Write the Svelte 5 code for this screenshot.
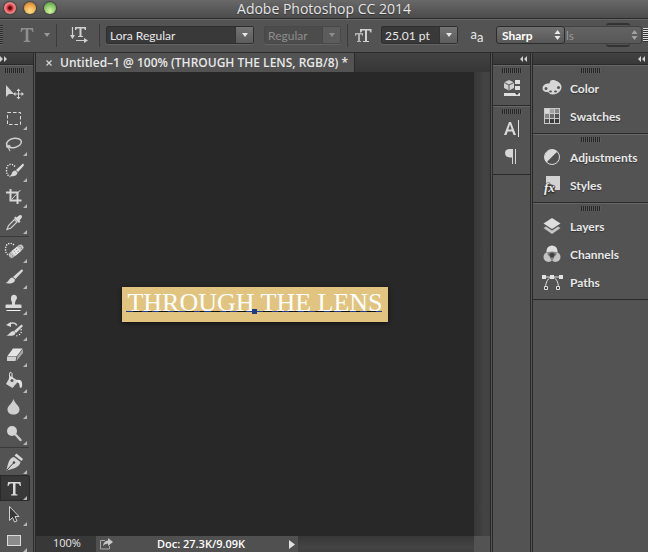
<script>
  const tools = [
    { name: 'move', label: 'Move Tool', plain: true },
    { name: 'marquee', label: 'Rectangular Marquee Tool' },
    { name: 'lasso', label: 'Lasso Tool' },
    { name: 'quick', label: 'Quick Selection Tool' },
    { name: 'crop', label: 'Crop Tool' },
    { name: 'dropper', label: 'Eyedropper Tool' },
    { name: 'heal', label: 'Spot Healing Brush Tool', divider: true },
    { name: 'brush', label: 'Brush Tool' },
    { name: 'stamp', label: 'Clone Stamp Tool' },
    { name: 'history', label: 'History Brush Tool' },
    { name: 'eraser', label: 'Eraser Tool' },
    { name: 'bucket', label: 'Paint Bucket Tool' },
    { name: 'blur', label: 'Blur Tool' },
    { name: 'dodge', label: 'Dodge Tool' },
    { name: 'pen', label: 'Pen Tool', divider: true },
    { name: 'type', label: 'Horizontal Type Tool' },
    { name: 'path', label: 'Path Selection Tool' },
    { name: 'rect', label: 'Rectangle Tool' }
  ];

  const iconGroups = [['properties'], ['character', 'paragraph']];

  const panelGroups = [
    ['Color', 'Swatches'],
    ['Adjustments', 'Styles'],
    ['Layers', 'Channels', 'Paths']
  ];

  let activeTool = $state('type');
  let font = $state('Lora Regular');
  let fontStyle = $state('Regular');
  let size = $state('25.01 pt');
  let antialias = $state('Sharp');
</script>

{#snippet grip()}
  <div class="grip"></div>
{/snippet}

{#snippet updown()}
  <svg class="updown" width="7" height="10" viewBox="0 0 7 10" aria-hidden="true">
    <path d="M3.5 0 6.5 4h-6zM3.5 10l3-4h-6z" fill="currentColor" />
  </svg>
{/snippet}

{#snippet chevron()}
  <svg width="6" height="4" viewBox="0 0 6 4" aria-hidden="true">
    <path d="M0 0h6L3 4z" fill="currentColor" />
  </svg>
{/snippet}

{#snippet toolIcon(name)}
  {#if name === 'move'}
    <path d="M6 6v12l3-3h5z" fill="#d2d2d2" />
    <path d="M18.500 11v8M14.500 15h8" stroke="#d2d2d2" fill="none" />
    <path d="M18.500 9.500l2 2.500h-4zM18.500 20.500l2-2.500h-4zM13 15l2.500-2v4zM24 15l-2.500-2v4z" fill="#d2d2d2" />
  {:else if name === 'marquee'}
    <rect x="7.500" y="7.500" width="13" height="12" fill="none" stroke="#dcdcdc" stroke-dasharray="3.500 2" />
  {:else if name === 'lasso'}
    <ellipse cx="14" cy="12" rx="7.500" ry="4.500" fill="none" stroke="#cfcfcf" stroke-width="1.500" transform="rotate(-12 14 12)" />
    <path d="M7.500 14c-1.500 1-1 2.500.5 2.500s2 0 2-1-1-1.500-1.500-.5c-.5 1.500 0 3 1.500 5" fill="none" stroke="#cfcfcf" stroke-width="1.200" />
  {:else if name === 'quick'}
    <path d="M15 9.500C11 5 6.500 8 6.500 13c0 4 1.500 6 4 6.500" fill="none" stroke="#eee" stroke-width="1.400" stroke-dasharray="1.200 1.300" />
    <path d="M23 6.500c1 .5 1 1.500.5 2.500L18 15l-2-2z" fill="#dedede" />
    <path d="M15.500 13.500l2 2c-.5 4-5 4-7.500 3.500 2-.5 1.500-5.500 5.500-5.500z" fill="#d6d6d6" />
  {:else if name === 'crop'}
    <path d="M10.500 6v11.500h11M6 9.500h11.500V21" fill="none" stroke="#d6d6d6" stroke-width="2" />
    <path d="M12 16l8.500-9" stroke="#d6d6d6" fill="none" />
  {:else if name === 'dropper'}
    <path d="M16.500 8.500l2.500-2c2-1.500 4 .5 2.500 2.500l-2 2.500 1 1-1.500 1.500-5-5L15.500 7.500z" fill="#dadada" />
    <path d="M14.500 10.500l-6 6-1.500 4 4-1.500 6-6z" fill="#555" stroke="#d0d0d0" stroke-width="1.200" />
  {:else if name === 'heal'}
    <path d="M14 7C10 3.500 5.500 6 5.500 11c0 3 1 5 3 6" fill="none" stroke="#f4f4f4" stroke-width="1.400" stroke-dasharray="1.200 1.300" />
    <g transform="rotate(-40 16 13)">
      <rect x="7" y="10" width="18" height="6.500" rx="3" fill="#c4c4c4" stroke="#3f3f3f" stroke-width=".6" />
      <rect x="12.500" y="10.300" width="7" height="6" fill="#e6e6e6" />
      <path d="M14 12h1m2 0h1m-4 2.500h1m2 0h1M9.500 12h1m-1 2.500h1m11-2.500h1m-1 2.500h1" stroke="#777" />
    </g>
  {:else if name === 'brush'}
    <path d="M21.500 5.500c1 0 2 .5 1 2L15.500 15l-2.500-2z" fill="#d9d9d9" />
    <path d="M12.500 13.500l2.500 2c0 4-5 4.500-10 3.500 4-.5 3.500-5 7.500-5.500z" fill="#d9d9d9" />
  {:else if name === 'stamp'}
    <path d="M11 8a3 3 0 1 1 5 2l-1 2.500v2h5.500q1 0 1 1V18h-16v-2.500q0-1 1-1H12v-2L11 10z" fill="#dadada" />
    <path d="M6.500 20.500h14" stroke="#f2f2f2" />
  {:else if name === 'history'}
    <path d="M8.500 8.500c4-3 8-1 8 1" fill="none" stroke="#dadada" stroke-width="1.500" />
    <path d="M6 9l5-3v5z" fill="#dadada" />
    <path d="M21.500 8.500L23 10l-7 7-2-2zM13.500 15l2 2c-1 3.500-5 3-9.500 2.500 4-.5 4-4.500 7.500-4.500z" fill="#dadada" />
    <path d="M21 13q1 4-1.500 5.500T15 20" fill="none" stroke="#eee" stroke-width="1.200" stroke-dasharray="1.200 1.500" />
  {:else if name === 'eraser'}
    <path d="M13 6.500h9.500L17 14H7.500z" fill="#e4e4e4" />
    <path d="M7 14.500h9.500l-1 4.500H7z" fill="#cfcfcf" />
    <path d="M17.500 14.500L23 7v4l-6.500 8z" fill="#aaa" />
  {:else if name === 'bucket'}
    <path d="M10.500 8l-4.500 8 6.500 4 6-7z" fill="#d4d4d4" />
    <path d="M12 13V5.500q-2-3-2.500 1L10 12" fill="none" stroke="#eee" />
    <circle cx="12" cy="12.500" r="1.500" fill="#555" />
    <path d="M16.500 12q5-1 5.500 3 .5 4-1 5-1.500 0-1.500-2.500 0-3-3-3.500z" fill="#e4e4e4" />
  {:else if name === 'blur'}
    <path d="M13.500 5c1.500 5 6 6.500 6 10.500 0 3-2.500 5-6 5s-6-2-6-5C7.500 11.500 12 10 13.500 5z" fill="#cfcfcf" />
  {:else if name === 'dodge'}
    <path d="M15.500 14.500l5 5.500" stroke="#c8c8c8" stroke-width="2.500" stroke-linecap="round" />
    <circle cx="12" cy="11" r="5" fill="#d4d4d4" />
  {:else if name === 'pen'}
    <path d="M16.500 4.500l6.500 5.500-1.500 2-7-5.500z" fill="#d9d9d9" />
    <path d="M14 8l6.500 5c-1 5-6 6.500-14 8.500C8 14.500 9 9 14 8z" fill="#d4d4d4" />
    <path d="M7 21l6.500-7" stroke="#3b3b3b" fill="none" />
    <circle cx="14" cy="13.500" r="1.200" fill="#444" />
  {:else if name === 'type'}
    <path d="M8 7h12.500l.5 4h-1q-.5-2.500-2-2.500h-2.500v10q0 1 2 1v1h-6.500v-1q2 0 2-1v-10h-2.500q-1.500 0-2 2.500h-1z" fill="#d9d9d9" />
  {:else if name === 'path'}
    <path d="M9.500 5.500v14l3-3 2 4.500 2.500-1-2-4.500h4z" fill="#383838" stroke="#cfcfcf" />
  {:else}
    <rect x="7.500" y="8.500" width="13" height="10" fill="#8c8c8c" stroke="#dadada" />
  {/if}
{/snippet}

{#snippet panelIcon(name)}
  <svg width="22" height="22" viewBox="0 0 22 22" aria-hidden="true">
    {#if name === 'Color'}
      <path fill-rule="evenodd" d="M9 5q0-2.500 4-2 6 1.500 7.500 6 .5 5-4.500 7.500-4 1.500-7 .5-1-2-3-2-4.500 0-4.500-4 .5-4 5-4.500Q9 7 9 5zM3.500 11.500a1.500 1.500 0 1 0 3 0 1.500 1.500 0 0 0-3 0zm4.500 3a1.500 1 0 1 0 3 0 1.500 1 0 0 0-3 0zm5 0a1.500 1 0 1 0 3 0 1.500 1 0 0 0-3 0zm3-4a1.500 1.500 0 1 0 3 0 1.500 1.500 0 0 0-3 0z" fill="#d6d6d6" />
    {:else if name === 'Swatches'}
      <path d="M3 3h16v16H3z" fill="#c9c9c9" />
      <path d="M4 4h4v4H4z" fill="#d8d8d8" />
      <path d="M9 4h4v4H9z" fill="#a2a2a2" />
      <path d="M14 4h4v4h-4zM4 9h4v4H4z" fill="#858585" />
      <path d="M9 9h4v4H9z" fill="#6b6b6b" />
      <path d="M14 9h4v4h-4zM4 14h4v4H4z" fill="#505050" />
      <path d="M9 14h9v4H9z" fill="#393939" />
      <path d="M13 14h1v4h-1z" fill="#c9c9c9" />
    {:else if name === 'Adjustments'}
      <circle cx="11" cy="11" r="7.500" fill="#555" stroke="#dadada" />
      <path d="M5.500 16.500a7.800 7.800 0 0 1 11-11z" fill="#dadada" />
      <path d="M6.500 15.500a6.400 6.400 0 0 0 9-9z" fill="#505050" />
    {:else if name === 'Styles'}
      <path d="M5 2h14v14h-5l-2-5-3-1-2 1H5z" fill="#d3d3d3" />
      <text x="3" y="18" class="fx">fx</text>
    {:else if name === 'Layers'}
      <path d="M11 3l8.500 5.500L11 14 2.500 8.500z" fill="#dedede" />
      <path d="M2.500 13l2.500-1.500 6 4 6-4 2.500 1.500-8.500 6z" fill="#c4c4c4" />
    {:else if name === 'Channels'}
      <circle cx="11" cy="8" r="5.500" fill="#dedede" />
      <circle cx="7.500" cy="14" r="5" fill="#c4c4c4" />
      <circle cx="14.500" cy="14" r="5" fill="#c4c4c4" />
      <path d="M6 9.500q5-2 10 0-.5 3-2.500 4-1 3-2.500 5-1.500-2-2.500-5-2-1-2.500-4z" fill="#858585" />
      <path d="M11 9.500l3 1.500-1.500 3.500h-3L8 11z" fill="#424242" />
    {:else if name === 'Paths'}
      <path d="M2 6h18M4.500 16.500c0-5 3-10.500 6.500-10.500s6.500 5 6.500 10.500" fill="none" stroke="#ddd" />
      <path d="M1 4h4v4H1zM9 4h4v4H9zM18 4h4v4h-4z" fill="#e2e2e2" />
      <path d="M3.500 15.500h3v3h-3zM15.500 15.500h3v3h-3z" fill="#444" stroke="#ddd" />
    {:else if name === 'properties'}
      <path d="M8 3l5 2.500v5.500L8 13.500 3 11V5.500z" fill="#d0d0d0" />
      <path d="M3 5.500L8 8l5-2.500M8 8v5" fill="none" stroke="#555" />
      <path d="M14 3h5v4h-5zM14 9h5v4h-5zM3 16h16v3H3z" fill="#dedede" />
      <path d="M14 16h4l-2 2z" fill="#333" />
    {:else if name === 'character'}
      <path fill-rule="evenodd" d="M8 4h2l5 13h-2.500l-1.200-3.500H6.700L5.500 17H3zM7.300 11.500h3.400L9 6.500z" fill="#dadada" />
      <path d="M17.500 2v17" stroke="#e2e2e2" />
    {:else}
      <path d="M14.500 3v15M11.500 3v15" stroke="#d6d6d6" />
      <path d="M15 3H9Q4 3 4 7t5 4.500h3V3z" fill="#d6d6d6" />
    {/if}
  </svg>
{/snippet}

<div class="app">
  <header class="titlebar">
    <div class="lights">
      <button class="light red" aria-label="Close"></button>
      <button class="light amber" aria-label="Minimize"></button>
      <button class="light green" aria-label="Zoom"></button>
    </div>
    <h1>Adobe Photoshop CC 2014</h1>
  </header>

  <div class="options">
    <div class="side-grip"></div>
    <button class="preset" aria-label="Tool presets">
      <svg width="14" height="16" viewBox="0 0 14 16" aria-hidden="true">
        <path d="M1 1h12l.5 4h-1Q12 2.500 10.500 2.500H8.300V13q0 1 2 1v1H3.700v-1q2 0 2-1V2.500H3.500Q2 2.500 1.500 5h-1z" fill="#8e8e8e" />
      </svg>
      {@render chevron()}
    </button>
    <button class="orient" aria-label="Toggle text orientation">
      <svg width="18" height="18" viewBox="0 0 18 18" aria-hidden="true">
        <path d="M5 1h11v3h-1l-1-1.500h-2.500V10H13v1H8v-1h1.500V2.500H7L6 4H5z" fill="#d0d0d0" />
        <path d="M2.500 1v10M6 14.500h10" stroke="#d0d0d0" stroke-width="1.200" />
        <path d="M0 9h5l-2.500 4zM14 12l4 2.500-4 2.500z" fill="#d0d0d0" />
      </svg>
    </button>
    <div class="combo family">
      <input aria-label="Font family" bind:value={font} />
      <button aria-label="Choose font family">{@render chevron()}</button>
    </div>
    <div class="combo style off">
      <input aria-label="Font style" bind:value={fontStyle} disabled />
      <button aria-label="Choose font style" disabled>{@render chevron()}</button>
    </div>
    <label class="size-label" for="size" aria-label="Font size">
      <svg width="17" height="15" viewBox="0 0 17 15" aria-hidden="true">
        <path d="M5 1h11.500v3.500h-1L14.500 2.500h-2.500V13h2v1H8v-1h2V2.500H7.500L6 4.500H5z" fill="#d0d0d0" />
        <path d="M0 5h8v3H7.500L6.500 6.500H5V13h1v1H2v-1h1V6.500H1.500L.5 8H0z" fill="#b2b2b2" />
      </svg>
    </label>
    <div class="combo size">
      <input id="size" bind:value={size} />
      <button aria-label="Choose font size">{@render chevron()}</button>
    </div>
    <label class="aa" for="aa"><span>a</span><span class="low">a</span></label>
    <div class="pop sharp">
      <select id="aa" bind:value={antialias}>
        <option>Sharp</option>
        <option>Crisp</option>
        <option>Smooth</option>
      </select>
      {@render updown()}
    </div>
    <div class="pop under">
      <select aria-label="Units" disabled>
        <option>ls</option>
      </select>
      {@render updown()}
    </div>
    <div class="side-grip light-grip"></div>
  </div>

  <div class="work">
    <aside class="toolbar">
      <div class="bar-head left">
        <svg width="7" height="6" viewBox="0 0 7 6" aria-hidden="true"><path d="M0 0l3 3-3 3zM4 0l3 3-3 3z" fill="#d0d0d0" /></svg>
      </div>
      <div class="grip-row">{@render grip()}</div>
      {#each tools as tool}
        {#if tool.divider}
          <div class="divider"></div>
        {/if}
        <button
          class="tool"
          class:active={activeTool === tool.name}
          aria-label={tool.label}
          aria-pressed={activeTool === tool.name}
          onclick={() => (activeTool = tool.name)}
        >
          <svg width="28" height="26" viewBox="0 0 28 26" aria-hidden="true">
            {@render toolIcon(tool.name)}
            {#if !tool.plain}
              <path d="M27 21v4h-4z" fill="#b8b8b8" />
            {/if}
          </svg>
        </button>
      {/each}
    </aside>

    <main class="document">
      <div class="tabs">
        <div class="tab">
          <button class="close" aria-label="Close document">
            <svg width="6" height="6" viewBox="0 0 6 6" aria-hidden="true"><path d="M.5.5l5 5M5.500.5l-5 5" stroke="#d6d6d6" stroke-width="1.200" /></svg>
          </button>
          <span>Untitled–1 @ 100% (THROUGH THE LENS, RGB/8) *</span>
        </div>
      </div>
      <div class="view">
        <div class="pasteboard">
          <div class="artboard">
            <span class="type-layer">THROUGH THE LENS</span>
            <div class="baseline"></div>
            <div class="handle"></div>
          </div>
        </div>
        <div class="vscroll"></div>
      </div>
      <footer class="status">
        <input class="zoom" aria-label="Zoom level" value="100%" />
        <div class="info">
          <svg width="14" height="12" viewBox="0 0 14 12" aria-hidden="true">
            <path d="M6 2.500H1.500v8.500h9V8" fill="none" stroke="#a8a8a8" />
            <path d="M9 0l5 4-5 4V5.500Q5.500 5.500 4 8q.5-5 5-5.500z" fill="#c8c8c8" />
          </svg>
          <span>Doc: 27.3K/9.09K</span>
          <button aria-label="Status options">
            <svg width="6" height="9" viewBox="0 0 6 9" aria-hidden="true"><path d="M0 0l6 4.500L0 9z" fill="#e2e2e2" /></svg>
          </button>
        </div>
        <div class="hscroll"></div>
        <div class="corner"></div>
      </footer>
    </main>

    <aside class="dock icons">
      <div class="bar-head"><svg width="7" height="6" viewBox="0 0 7 6" aria-hidden="true"><path d="M3 0L0 3l3 3zM7 0L4 3l3 3z" fill="#d0d0d0" /></svg></div>
      {#each iconGroups as group}
        <div class="group">
          {@render grip()}
          {#each group as name}
            <button class="panel" aria-label={name}>{@render panelIcon(name)}</button>
          {/each}
        </div>
      {/each}
    </aside>

    <aside class="dock names">
      <div class="bar-head"><svg width="7" height="6" viewBox="0 0 7 6" aria-hidden="true"><path d="M3 0L0 3l3 3zM7 0L4 3l3 3z" fill="#d0d0d0" /></svg></div>
      {#each panelGroups as group}
        <div class="group">
          {@render grip()}
          {#each group as name}
            <button class="panel">{@render panelIcon(name)}<span>{name}</span></button>
          {/each}
        </div>
      {/each}
    </aside>
  </div>
</div>

<style>
  :global(body) {
    background: #282828;
  }

  .app {
    display: flex;
    flex-direction: column;
    height: 100vh;
    overflow: hidden;
    font-family: "Open Sans", "Noto Sans", sans-serif;
    font-size: 11px;
    color: #e8e8e8;
    background: #535353;
  }

  .app * {
    box-sizing: border-box;
  }

  button {
    padding: 0;
    border: 0;
    background: none;
    color: inherit;
    font: inherit;
  }

  input,
  select {
    min-width: 0;
    border: 0;
    font: inherit;
    color: inherit;
  }

  svg {
    display: block;
    flex: none;
  }

  .titlebar {
    display: grid;
    grid-template-columns: 1fr auto 1fr;
    align-items: center;
    height: 19px;
    flex: none;
    border-bottom: 1px solid #2c2c2c;
    background: linear-gradient(#686868, #4c4c4c);
  }

  h1 {
    margin: 0;
    font-size: 14px;
    font-weight: 400;
    line-height: 18px;
    color: #e6e6e6;
    text-shadow: 0 1px 1px #333;
  }

  .lights {
    display: flex;
    gap: 8px;
    padding: 0 0 2px 4px;
  }

  .light {
    width: 12px;
    height: 12px;
    border-radius: 50%;
    box-shadow: 0 0 1px 1px #444;
  }

  .red {
    background: radial-gradient(circle at 50% 50%, #5c0a0c 0 15%, #e2444a 35%, #f08a8c 60%, #a02a2e);
  }

  .amber {
    background: radial-gradient(circle at 50% 75%, #ffe08a, #eea646 55%, #a86a24);
  }

  .green {
    background: radial-gradient(circle at 50% 75%, #d6f5a6, #86c464 55%, #4c7c38);
  }

  .options {
    display: flex;
    align-items: center;
    height: 34px;
    flex: none;
    padding-bottom: 2px;
    border-top: 1px solid #666;
    border-bottom: 1px solid #2c2c2c;
    font-family: Lato, "Open Sans", sans-serif;
    font-size: 12px;
  }

  .side-grip {
    width: 3px;
    height: 20px;
    background: repeating-linear-gradient(#2e2e2e 0 1px, #626262 1px 2px);
  }

  .light-grip {
    flex: 1;
    height: 14px;
    margin-left: 1px;
    background: repeating-linear-gradient(#ddd 0 1px, #333 1px 2px);
  }

  .preset,
  .orient {
    display: flex;
    align-items: center;
    height: 23px;
    border-right: 1px solid #3c3c3c;
  }

  .preset {
    width: 54px;
    gap: 10px;
    padding-left: 17px;
    color: #999;
  }

  .orient {
    width: 43px;
    padding-left: 13px;
  }

  .combo {
    display: flex;
    height: 18px;
    border: 1px solid #2e2e2e;
    border-radius: 2px;
    background: #393939;
    box-shadow: 0 1px 0 #646464;
  }

  .combo input {
    flex: 1;
    padding: 0 3px;
    background: none;
  }

  .combo button {
    display: grid;
    place-items: center;
    width: 18px;
    border-left: 1px solid #333;
    background: linear-gradient(#747474, #5c5c5c);
  }

  .family {
    width: 148px;
    margin-left: 6px;
  }

  .style {
    width: 77px;
    margin-left: 10px;
  }

  .off {
    border-color: #484848;
    background: #4c4c4c;
    color: #8e8e8e;
  }

  .off button {
    border-color: #484848;
    background: #5c5c5c;
  }

  .size-label {
    display: flex;
    align-items: center;
    width: 34px;
    height: 23px;
    margin-left: 6px;
    padding-left: 7px;
    border-left: 1px solid #3c3c3c;
  }

  .size {
    width: 77px;
  }

  .aa {
    display: flex;
    justify-content: center;
    width: 38px;
    font-size: 13px;
    line-height: 14px;
  }

  .low {
    padding-top: 3px;
  }

  .pop {
    position: relative;
    display: grid;
    align-items: center;
    height: 18px;
  }

  .pop select {
    grid-area: 1 / 1;
    height: 18px;
    padding: 0 5px;
    border: 1px solid #2c2c2c;
    border-radius: 3px;
    appearance: none;
    background: linear-gradient(#707070, #575757);
    color: #fff;
    font-weight: 700;
  }

  .pop .updown {
    grid-area: 1 / 1;
    justify-self: end;
    margin-right: 4px;
    pointer-events: none;
  }

  .sharp {
    width: 69px;
  }

  .under {
    width: 77px;
    color: #a2a2a2;
  }

  .under select {
    padding: 0 1px;
    border-color: #414141;
    border-left: 0;
    border-radius: 0 3px 3px 0;
    background: linear-gradient(#636363, #585858);
    color: #999;
    font-weight: 400;
    opacity: 1;
  }

  /* edges of the button that sits behind the units menu */
  .under::before {
    content: "";
    position: absolute;
    top: -3px;
    right: 12px;
    bottom: -3px;
    width: 24px;
    border: 2px solid #333;
    border-width: 2px 0;
    border-radius: 3px;
    pointer-events: none;
  }

  .work {
    display: flex;
    flex: 1;
    min-height: 0;
  }

  .bar-head {
    display: flex;
    align-items: center;
    justify-content: flex-end;
    height: 12px;
    flex: none;
    padding-right: 3px;
    border-bottom: 1px solid #2a2a2a;
    background: linear-gradient(#424242, #383838);
  }

  .bar-head.left {
    justify-content: flex-start;
    padding: 0;
  }

  .grip {
    width: 20px;
    height: 5px;
    background: repeating-linear-gradient(90deg, #262626 0 1px, #5a5a5a 1px 2px);
  }

  .toolbar {
    display: flex;
    flex-direction: column;
    width: 36px;
    flex: none;
    border-right: 3px double #2a2a2a;
  }

  .grip-row {
    height: 14px;
    flex: none;
    padding: 2px 5px;
    border-top: 1px solid #666;
  }

  .tool {
    height: 26px;
    flex: none;
    margin-right: 3px;
  }

  .tool.active {
    border-radius: 0 2px 2px 0;
    background: #383838;
    box-shadow: inset 0 0 1px 1px #2a2a2a;
  }

  .divider {
    height: 1px;
    flex: none;
    margin: 1px 4px 1px 0;
    background: #3a3a3a;
  }

  .document {
    display: flex;
    flex: 1;
    flex-direction: column;
    min-width: 0;
  }

  .tabs {
    display: flex;
    height: 19px;
    flex: none;
    background: linear-gradient(#424242, #363636);
  }

  .tab {
    display: flex;
    align-items: center;
    gap: 8px;
    padding: 0 6px 0 10px;
    border-right: 1px solid #2a2a2a;
    background: #535353;
    font-size: 12px;
    font-weight: 600;
    white-space: nowrap;
  }

  .view {
    display: flex;
    flex: 1;
    min-height: 0;
  }

  .pasteboard {
    display: grid;
    flex: 1;
    place-items: center;
    background: #282828;
  }

  .artboard {
    position: relative;
    padding: 0 5px;
    background: #e0c47f;
    box-shadow: 0 1px 4px #111;
  }

  .type-layer {
    display: block;
    height: 35px;
    font-family: "Liberation Serif", serif;
    font-size: 26px;
    line-height: 32px;
    color: #fff;
    white-space: nowrap;
  }

  .baseline {
    position: absolute;
    top: 24px;
    right: 6px;
    left: 4px;
    height: 1px;
    background: repeating-linear-gradient(90deg, #1d3c8c 0 7px, #111 7px 16px, #1d3c8c 16px 22px, #111 22px 26px);
  }

  .handle {
    position: absolute;
    top: 22px;
    left: calc(50% - 3px);
    width: 5px;
    height: 5px;
    background: #1d3c84;
  }

  .vscroll {
    width: 16px;
    background: linear-gradient(90deg, #373737, #444 70%, #3f3f3f);
  }

  .status {
    display: flex;
    height: 16px;
    flex: none;
    line-height: 14px;
  }

  .zoom {
    width: 60px;
    padding: 0 0 2px 17px;
    background: #383838;
  }

  .info {
    display: flex;
    align-items: center;
    justify-content: space-between;
    width: 202px;
    padding: 0 3px;
    background: #505050;
    font-weight: 600;
    color: #fff;
  }

  .hscroll {
    flex: 1;
    background: linear-gradient(#373737, #444 70%, #3f3f3f);
  }

  .corner {
    width: 16px;
    background: #535353;
  }

  .dock {
    flex: none;
    border-left: 3px double #2a2a2a;
  }

  .icons {
    width: 40px;
  }

  .names {
    width: 118px;
  }

  .group {
    display: flex;
    flex-direction: column;
    align-items: center;
    padding: 2px 0 3px;
    border-top: 1px solid #666;
    border-bottom: 1px solid #2a2a2a;
  }

  .group .grip {
    margin: 0 0 1px;
  }

  .panel {
    display: flex;
    align-items: center;
    height: 28px;
  }

  .names .panel {
    width: 100%;
    gap: 7px;
    padding-left: 8px;
    font-family: Lato, "Open Sans", sans-serif;
    font-size: 12px;
    font-weight: 700;
    text-shadow: 0 1px 1px #333;
  }

  .fx {
    font: italic 700 13px "Liberation Serif", serif;
    fill: #eee;
    stroke: #444;
    stroke-width: 1px;
    paint-order: stroke;
  }
</style>
